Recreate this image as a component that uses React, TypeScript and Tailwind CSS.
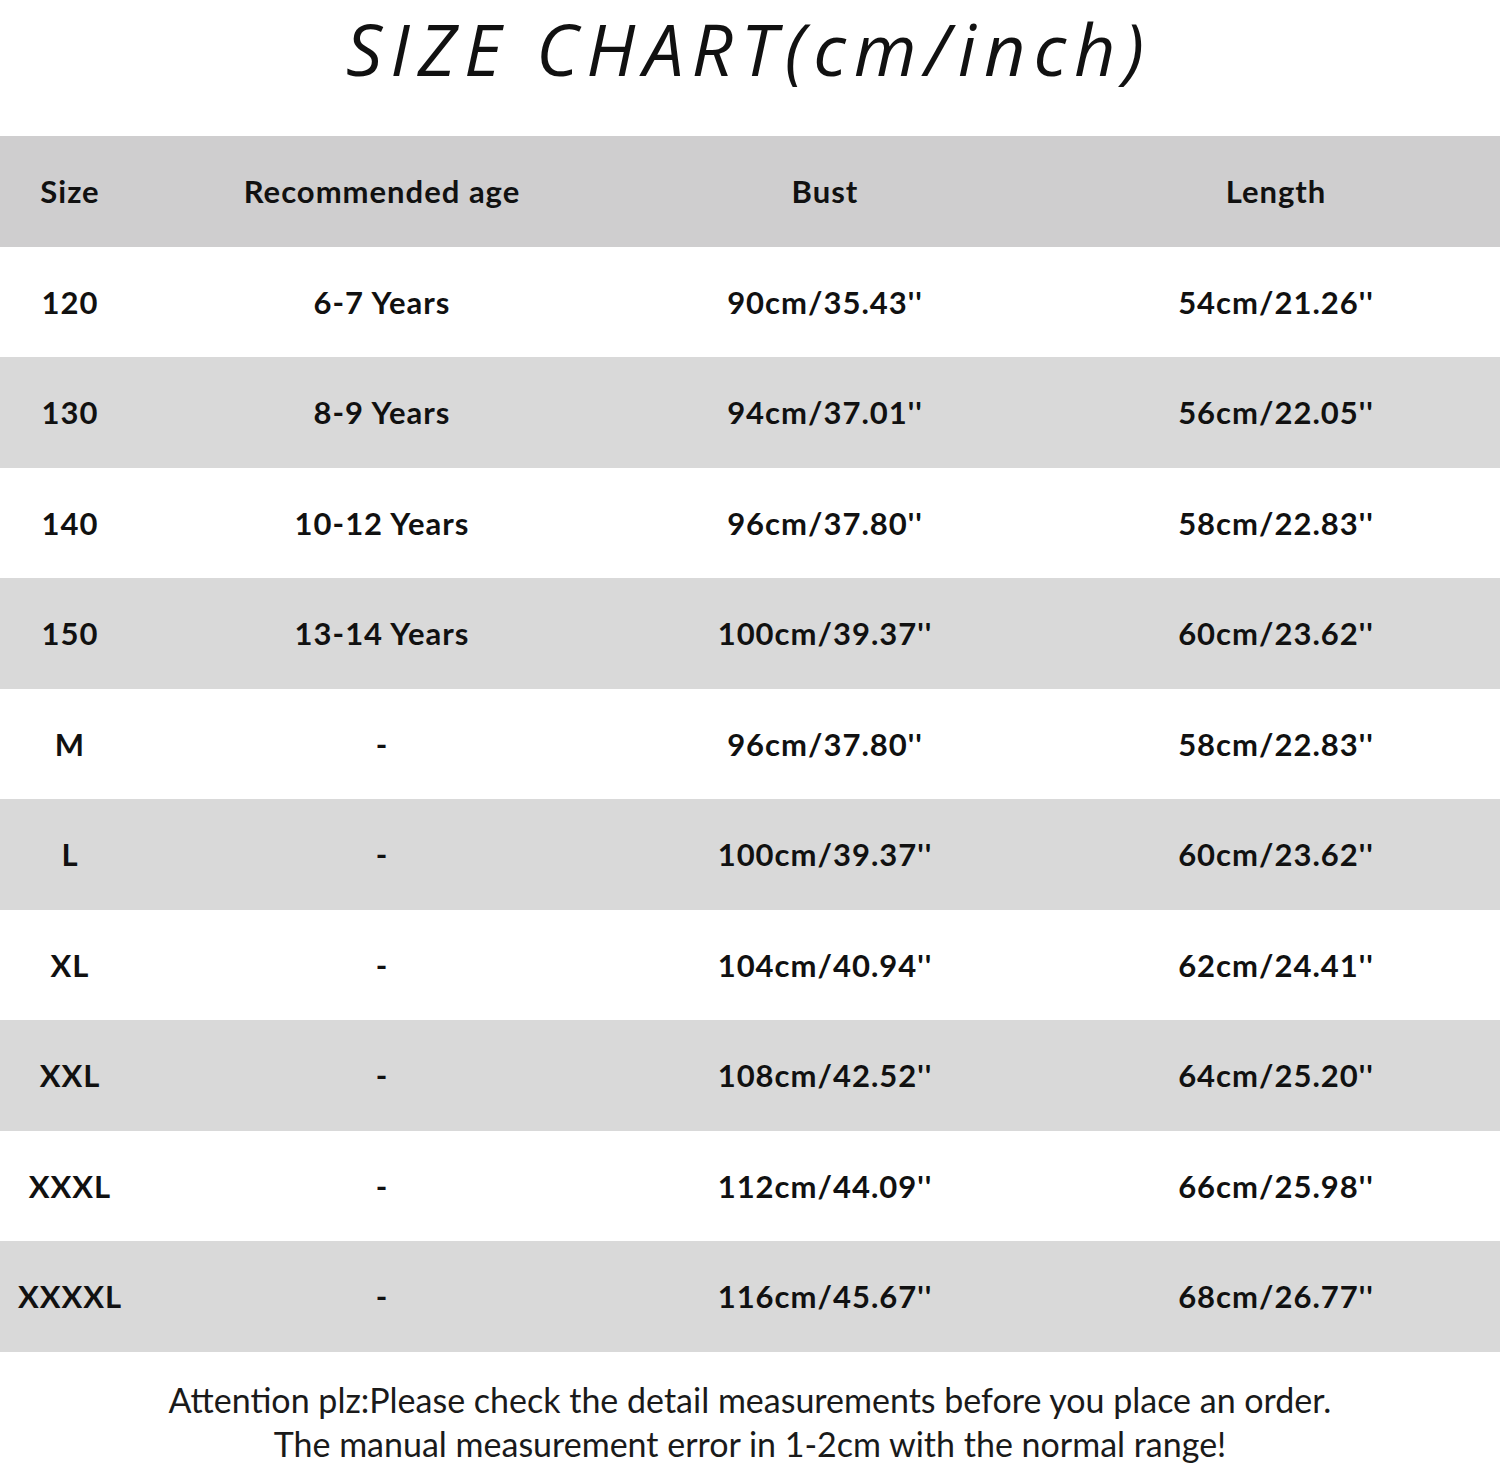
const rows = [
  ['120', '6-7 Years', "90cm/35.43''", "54cm/21.26''"],
  ['130', '8-9 Years', "94cm/37.01''", "56cm/22.05''"],
  ['140', '10-12 Years', "96cm/37.80''", "58cm/22.83''"],
  ['150', '13-14 Years', "100cm/39.37''", "60cm/23.62''"],
  ['M', '-', "96cm/37.80''", "58cm/22.83''"],
  ['L', '-', "100cm/39.37''", "60cm/23.62''"],
  ['XL', '-', "104cm/40.94''", "62cm/24.41''"],
  ['XXL', '-', "108cm/42.52''", "64cm/25.20''"],
  ['XXXL', '-', "112cm/44.09''", "66cm/25.98''"],
  ['XXXXL', '-', "116cm/45.67''", "68cm/26.77''"],
];

function Row({ cells, bg, h }: { cells: string[]; bg: string; h: string }) {
  return (
    <div className={`grid grid-cols-[140px_484px_402px_474px] items-center ${h} ${bg}`}>
      <div className="text-center">{cells[0]}</div>
      <div className="text-center">{cells[1]}</div>
      <div className="text-center">{cells[2]}</div>
      <div className="text-center pl-[26px]">{cells[3]}</div>
    </div>
  );
}

export default function App() {
  return (
    <div className="w-[1500px] h-[1472px] bg-white text-[#111]">
      <div className="h-[136px] flex justify-center">
        <h1 className="text-[72px] leading-[96px] italic font-normal tracking-[8px] [font-family:'Open_Sans',sans-serif] pr-[2px]">
          SIZE CHART(cm/inch)
        </h1>
      </div>

      <div className="[font-family:Lato,sans-serif] font-bold text-[31px] tracking-[1px] leading-none">
        <Row cells={['Size', 'Recommended age', 'Bust', 'Length']} bg="bg-[#cfcecf]" h="h-[111px]" />
        {rows.map((r, i) => (
          <Row
            key={r[0]}
            cells={r}
            bg={i % 2 === 0 ? 'bg-white' : 'bg-[#d9d9d9]'}
            h={i % 2 === 0 ? 'h-[110px]' : 'h-[111px]'}
          />
        ))}
      </div>

      <div className="pt-[26px] text-center text-[34px] leading-[44px] text-[#1a1a1a] [font-family:Lato,sans-serif]">
        <p>Attention plz:Please check the detail measurements before you place an order.</p>
        <p>The manual measurement error in 1-2cm with the normal range!</p>
      </div>
    </div>
  );
}
